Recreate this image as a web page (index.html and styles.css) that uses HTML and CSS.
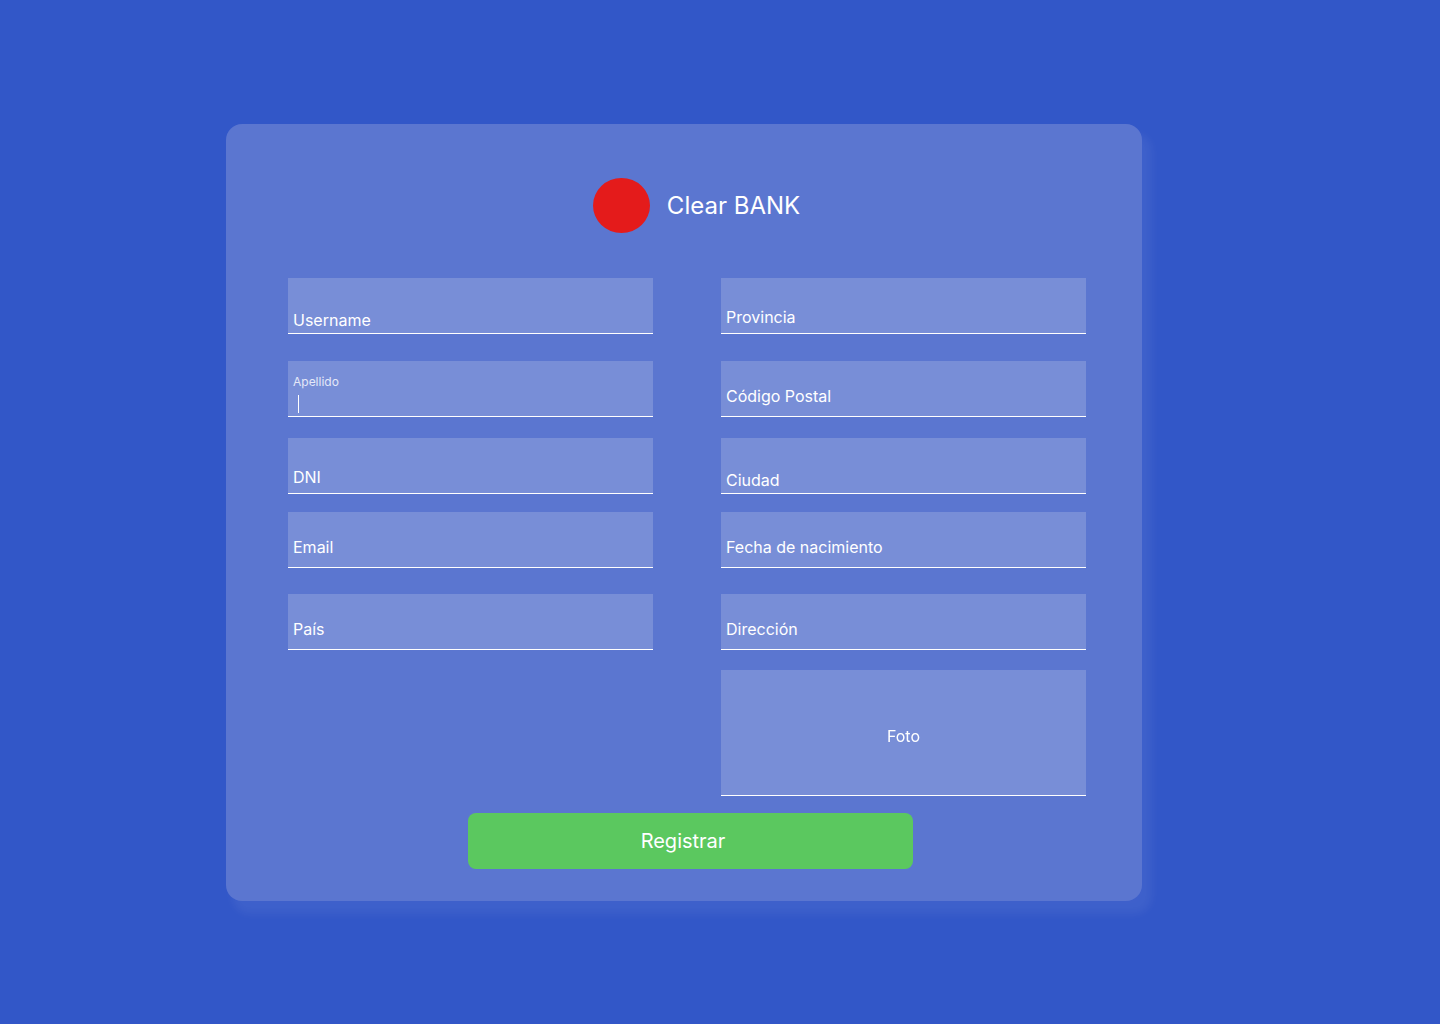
FILE: index.html
```html
<!DOCTYPE html>
<html lang="es">
<head>
<meta charset="utf-8">
<meta name="viewport" content="width=device-width, initial-scale=1">
<title>Clear BANK</title>
<link rel="stylesheet" href="styles.css">
</head>
<body>
<main class="card">
  <header class="brand">
    <svg class="logo" viewBox="0 0 57 55" aria-hidden="true"><ellipse cx="28.5" cy="27.5" rx="28.5" ry="27.5" fill="#e41b1b"/></svg>
    <h1 class="brand-name">Clear BANK</h1>
  </header>
  <form>
    <div class="fields">
      <div class="field field-low"><label for="username">Username</label><input id="username" type="text"></div>
      <div class="field field-mid"><label for="provincia">Provincia</label><input id="provincia" type="text"></div>
      <div class="field field-active"><label for="apellido">Apellido</label><input id="apellido" type="text"><span class="caret"></span></div>
      <div class="field"><label for="postal">Código Postal</label><input id="postal" type="text"></div>
      <div class="field field-mid"><label for="dni">DNI</label><input id="dni" type="text"></div>
      <div class="field field-low"><label for="ciudad">Ciudad</label><input id="ciudad" type="text"></div>
      <div class="field"><label for="email">Email</label><input id="email" type="email"></div>
      <div class="field"><label for="nacimiento">Fecha de nacimiento</label><input id="nacimiento" type="text"></div>
      <div class="field"><label for="pais">País</label><input id="pais" type="text"></div>
      <div class="field"><label for="direccion">Dirección</label><input id="direccion" type="text"></div>
      <div class="field field-photo"><label for="foto">Foto</label><input id="foto" type="file"></div>
    </div>
    <div class="actions"><button class="submit" type="submit">Registrar</button></div>
  </form>
</main>
</body>
</html>
```
FILE: styles.css
```css
* {
  box-sizing: border-box;
}

body {
  margin: 0;
  padding: 124px 298px 123px 226px;
  background: #3257c8;
  color: #fff;
  font-family: Inter, sans-serif;
  font-size: 16px;
  font-weight: 400;
  line-height: 20px;
}

.card {
  padding: 54px 56px 32px 62px;
  border-radius: 16px;
  background: #5b76d0;
  box-shadow: 8px 11px 8px 2px rgba(255, 255, 255, 0.06);
}

.brand {
  display: flex;
  align-items: center;
  justify-content: center;
  gap: 17px;
  margin-bottom: 45px;
  padding-left: 19px;
}

.logo {
  width: 57px;
  height: 55px;
}

.brand-name {
  margin: 0;
  font-size: 24px;
  font-weight: inherit;
  line-height: 28px;
}

.fields {
  display: grid;
  grid-template-columns: 1fr 1fr;
  grid-template-rows: 83px 77px 74px 82px 76px auto;
  column-gap: 68px;
  align-items: start;
}

/* The label and its input share one grid cell */
.field {
  display: grid;
  min-height: 56px;
  border-bottom: 1px solid #fff;
  background: #788ed7;
}

.field > * {
  grid-area: 1 / 1;
}

.field label {
  z-index: 1;
  align-self: end;
  justify-self: start;
  padding: 0 5px 10px;
}

.field-low label {
  padding-bottom: 3px;
}

.field-mid label {
  padding-bottom: 6px;
}

.field input {
  width: 100%;
  min-width: 0;
  padding: 24px 10px 4px;
  border: 0;
  outline: 0;
  background: transparent;
  color: inherit;
  font: inherit;
}

.field-active label {
  align-self: start;
  padding: 13px 5px 0;
  color: #e4e8f7;
  font-size: 12px;
  line-height: 16px;
}

.caret {
  align-self: end;
  width: 1px;
  height: 18px;
  margin: 0 0 3px 10px;
  background: #fff;
}

.field-photo {
  grid-column: 2;
  min-height: 126px;
}

.field-photo label {
  place-self: center;
  padding: 6px 0 0;
}

.field-photo input {
  opacity: 0;
}

.actions {
  padding: 17px 173px 0 180px;
}

.submit {
  display: block;
  width: 100%;
  height: 56px;
  padding: 0 15px 0 0;
  border: 0;
  border-radius: 8px;
  background: #5bc85f;
  color: #fff;
  font: inherit;
  font-size: 20px;
  line-height: 24px;
}
```
